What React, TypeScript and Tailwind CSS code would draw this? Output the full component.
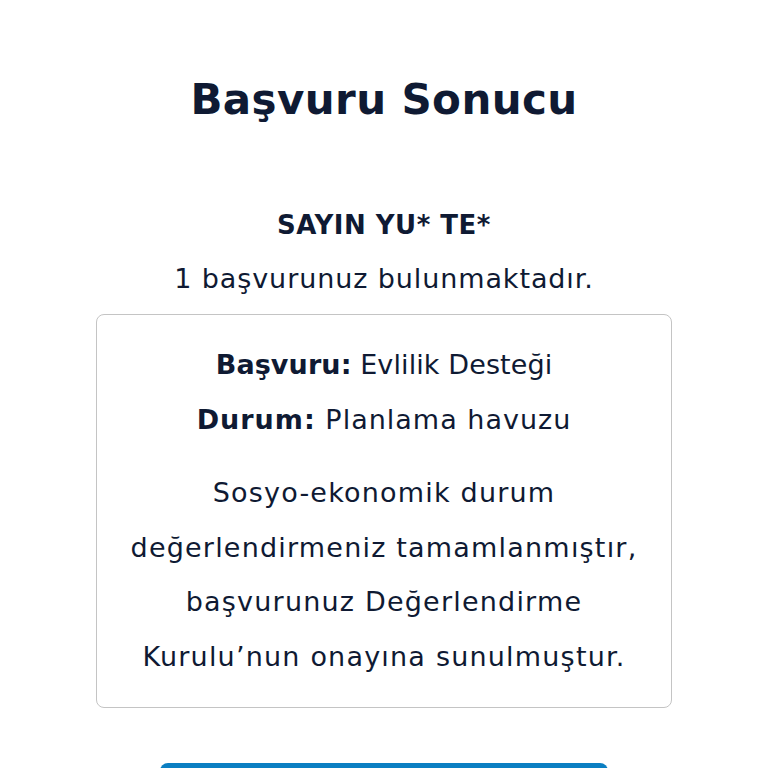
export default function App() {
  return (
    <div
      className="min-h-[768px] bg-white flex flex-col items-center text-[#0f1a33]"
      style={{ fontFamily: '"DejaVu Sans", "Noto Sans", sans-serif' }}
    >
      <h1 className="mt-[72px] h-[56px] leading-[56px] text-[42px] font-bold tracking-[0.4px]">
        Başvuru Sonucu
      </h1>
      <div className="mt-[80px] h-[34px] leading-[34px] text-[26px] font-bold tracking-[0.5px]">SAYIN YU* TE*</div>
      <div className="mt-[20px] h-[34px] leading-[34px] text-[27px] tracking-[0.9px]">1 başvurunuz bulunmaktadır.</div>
      <div className="mt-[18px] w-[576px] h-[394px] rounded-[8px] border-[1.5px] border-[#c4c4c4] flex flex-col items-center pt-[33px]">
        <div className="h-[34px] leading-[34px] text-[27px] tracking-[0.1px]">
          <span className="font-bold">Başvuru:</span> Evlilik Desteği
        </div>
        <div className="mt-[21px] h-[34px] leading-[34px] text-[27px] tracking-[1px]">
          <span className="font-bold">Durum:</span> Planlama havuzu
        </div>
        <p className="mt-[29px] w-[570px] text-center text-[27px] leading-[54.5px] tracking-[1.2px]">
          Sosyo-ekonomik durum
          <br />
          değerlendirmeniz tamamlanmıştır,
          <br />
          başvurunuz Değerlendirme
          <br />
          Kurulu’nun onayına sunulmuştur.
        </p>
      </div>
      <button className="mt-[55px] w-[448px] h-[56px] rounded-[8px] bg-[#0b7fc2]"></button>
    </div>
  );
}
